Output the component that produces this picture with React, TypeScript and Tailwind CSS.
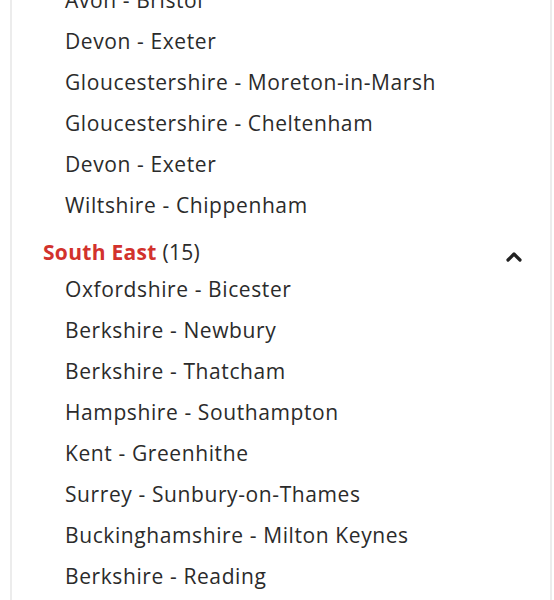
const west = [
  'Avon - Bristol',
  'Devon - Exeter',
  'Gloucestershire - Moreton-in-Marsh',
  'Gloucestershire - Cheltenham',
  'Devon - Exeter',
  'Wiltshire - Chippenham',
]

const southEast = [
  'Oxfordshire - Bicester',
  'Berkshire - Newbury',
  'Berkshire - Thatcham',
  'Hampshire - Southampton',
  'Kent - Greenhithe',
  'Surrey - Sunbury-on-Thames',
  'Buckinghamshire - Milton Keynes',
  'Berkshire - Reading',
]

function Item({ label }: { label: string }) {
  return (
    <li className="flex h-[41px] items-center pl-[53px] text-[21px] tracking-[0.6px] text-[#2b2b2b]">
      <a href="#">{label}</a>
    </li>
  )
}

export default function App() {
  return (
    <div
      className="h-[600px] w-[554px] overflow-hidden bg-white"
      style={{ fontFamily: '"Open Sans", Lato, sans-serif' }}
    >
      <div className="ml-[10px] mr-[2px] -mt-[20px] border-x-2 border-[#ececec] bg-white pb-[24px]">
        <ul>
          {west.map((w, i) => (
            <Item key={i} label={w} />
          ))}
        </ul>
        <div className="flex items-center justify-between pb-[3px] pl-[31px] pr-[28px] pt-[13px]">
          <div className="text-[21px] leading-[27px] tracking-[0.3px]">
            <span className="font-bold text-[#d2322d]">South East</span>{' '}
            <span className="text-[#2b2b2b]">(15)</span>
          </div>
          <svg width="16" height="12" viewBox="0 0 16 12" className="mt-[8px]">
            <path d="M2 9 L8 3 L14 9" fill="none" stroke="#222" strokeWidth="3.2" strokeLinecap="round" strokeLinejoin="round" />
          </svg>
        </div>
        <ul>
          {southEast.map((w, i) => (
            <Item key={i} label={w} />
          ))}
        </ul>
      </div>
    </div>
  )
}
